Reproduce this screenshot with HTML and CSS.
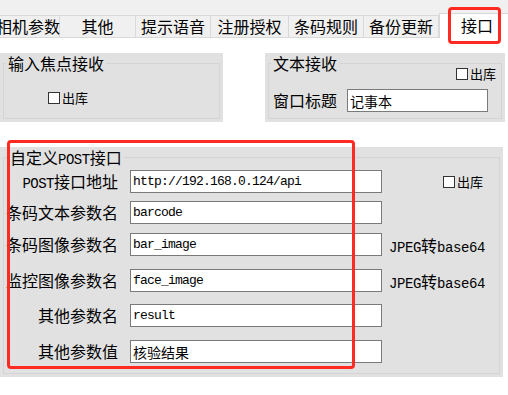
FILE: index.html
```html
<!DOCTYPE html>
<html lang="zh-CN">
<head>
<meta charset="utf-8">
<link rel="stylesheet" href="styles.css">
</head>
<body>
<div class="header">
  <div class="tabs">
    <div class="tab t1">相机参数</div>
    <div class="tab t2">其他</div>
    <div class="tab t3">提示语音</div>
    <div class="tab t4">注册授权</div>
    <div class="tab t5">条码规则</div>
    <div class="tab t6">备份更新</div>
    <div class="tab active">接口<span class="mark mark-tab"></span></div>
  </div>
</div>
<div class="content">
  <div class="top-row">
    <div class="panel p1">
      <fieldset class="group">
        <legend class="lg-a">输入焦点接收</legend>
        <label class="chk chk-p1"><span class="box"></span>出库</label>
      </fieldset>
    </div>
    <div class="panel p2">
      <fieldset class="group">
        <legend class="lg-a">文本接收</legend>
        <div class="chk-row"><label class="chk"><span class="box"></span>出库</label></div>
        <div class="field-row">
          <span class="lbl">窗口标题</span>
          <input class="inp cjk w-title" value="记事本" readonly>
        </div>
      </fieldset>
    </div>
  </div>
  <div class="panel p3">
    <fieldset class="group">
      <legend class="lg-b">自定义<span class="lat">POST</span>接口</legend>
      <div class="prow g1">
        <span class="plbl"><span class="lat">POST</span>接口地址</span>
        <input class="inp mono" value="http://192.168.0.124/api" readonly>
        <label class="chk chk-p3"><span class="box"></span>出库</label>
      </div>
      <div class="prow g2">
        <span class="plbl">条码文本参数名</span>
        <input class="inp mono" value="barcode" readonly>
      </div>
      <div class="prow g3">
        <span class="plbl">条码图像参数名</span>
        <input class="inp mono" value="bar_image" readonly>
        <span class="ext">JPEG<span class="cj">转</span>base64</span>
      </div>
      <div class="prow g4">
        <span class="plbl">监控图像参数名</span>
        <input class="inp mono" value="face_image" readonly>
        <span class="ext">JPEG<span class="cj">转</span>base64</span>
      </div>
      <div class="prow g5">
        <span class="plbl">其他参数名</span>
        <input class="inp mono" value="result" readonly>
      </div>
      <div class="prow g4">
        <span class="plbl">其他参数值</span>
        <input class="inp cjk" value="核验结果" readonly>
      </div>
    </fieldset>
    <div class="mark mark-post"></div>
  </div>
</div>
</body>
</html>
```
FILE: styles.css
```css
* { box-sizing: border-box; }
html, body { margin: 0; padding: 0; overflow: hidden; }
body {
  width: 508px;
  height: 395px;
  background: #ffffff;
  color: #000;
  font-family: "Noto Sans CJK SC", sans-serif;
}
.header {
  height: 38px;
  background: #f0f0f0;
  display: flex;
  align-items: flex-end;
}
.tabs {
  display: flex;
  align-items: flex-end;
  margin-left: -11px;
}
.tab {
  flex: none;
  height: 23px;
  border: 1px solid #d9d9d9;
  border-left: none;
  background: #f0f0f0;
  font-size: 16px;
  line-height: 21px;
  text-align: center;
  white-space: nowrap;
}
.t1 { width: 71px; padding-left: 7px; }
.t2 { width: 76px; }
.t3 { width: 75px; }
.t4 { width: 78px; }
.t5 { width: 75px; }
.t6 { width: 75px; }
.tab.active {
  width: 76px;
  height: 25px;
  background: #fff;
  border-left: 1px solid #d9d9d9;
  border-bottom: none;
  line-height: 23px;
  position: relative;
}
.mark {
  position: absolute;
  border: 3px solid #ff2b22;
  border-radius: 4px;
  pointer-events: none;
}
.mark-tab { left: 8px; top: -7px; width: 53px; height: 37px; }
.mark-post { left: 7px; top: -7px; width: 348px; height: 229px; }

.content { padding-top: 15px; }
.top-row { display: flex; gap: 42px; height: 69px; }
.panel {
  background: #e1e1e1;
  display: flex;
  flex-direction: column;
}
.p1 { width: 223px; }
.p2 { width: 240px; }
.p3 { width: 503px; height: 230px; margin-top: 25px; position: relative; }
.group {
  flex: 1;
  min-width: 0;
  margin: 0 3px 3px;
  padding: 0;
  border: 1px solid #d4d4d4;
}
legend {
  padding: 0 2px;
  font-size: 16px;
  line-height: 20px;
  height: 20px;
  white-space: nowrap;
}
.lg-a { margin-left: 2px; }
.lg-b { margin-left: 4px; }
.lat {
  font-family: "Liberation Mono", monospace;
  font-size: 14px;
  letter-spacing: -0.5px;
  line-height: 1;
}

.chk {
  display: flex;
  align-items: center;
  gap: 2px;
  font-size: 13px;
  line-height: 13px;
  white-space: nowrap;
}
.box {
  width: 12px;
  height: 12px;
  border: 1px solid #333;
  background: #fff;
  flex: none;
}
.chk-p1 { margin: 18px 0 0 44px; width: max-content; }
.chk-row {
  display: flex;
  justify-content: flex-end;
  margin-top: -6px;
  padding-right: 5px;
  height: 13px;
}
.field-row {
  display: flex;
  align-items: center;
  margin-top: 9px;
  padding-left: 4px;
}
.lbl { width: 64px; font-size: 16px; line-height: 23px; white-space: nowrap; }
.inp {
  height: 23px;
  border: 1px solid #7a7a7a;
  background: #fff;
  padding: 0 2px;
  margin: 0;
  outline: none;
  color: #000;
}
.mono {
  font-family: "Liberation Mono", monospace;
  font-size: 13px;
  letter-spacing: -0.8px;
}
.cjk { font-family: "Noto Sans CJK SC", sans-serif; font-size: 14px; }
.w-title { width: 141px; margin-left: 10px; }

.prow { display: flex; align-items: center; height: 23px; }
.prow .inp { width: 252px; margin-left: 12px; }
.plbl {
  width: 114px;
  flex: none;
  text-align: right;
  font-size: 16px;
  line-height: 23px;
  white-space: nowrap;
}
.g1 { margin-top: 3px; }
.g2 { margin-top: 8px; }
.g3 { margin-top: 9px; }
.g4 { margin-top: 13px; }
.g5 { margin-top: 12px; }
.chk-p3 { margin-left: 61px; }
.ext {
  margin-left: 7px;
  font-family: "Liberation Mono", monospace;
  font-size: 14px;
  letter-spacing: -0.4px;
  white-space: nowrap;
}
.cj { font-family: "Noto Sans CJK SC", sans-serif; font-size: 16px; letter-spacing: 0; }
```
